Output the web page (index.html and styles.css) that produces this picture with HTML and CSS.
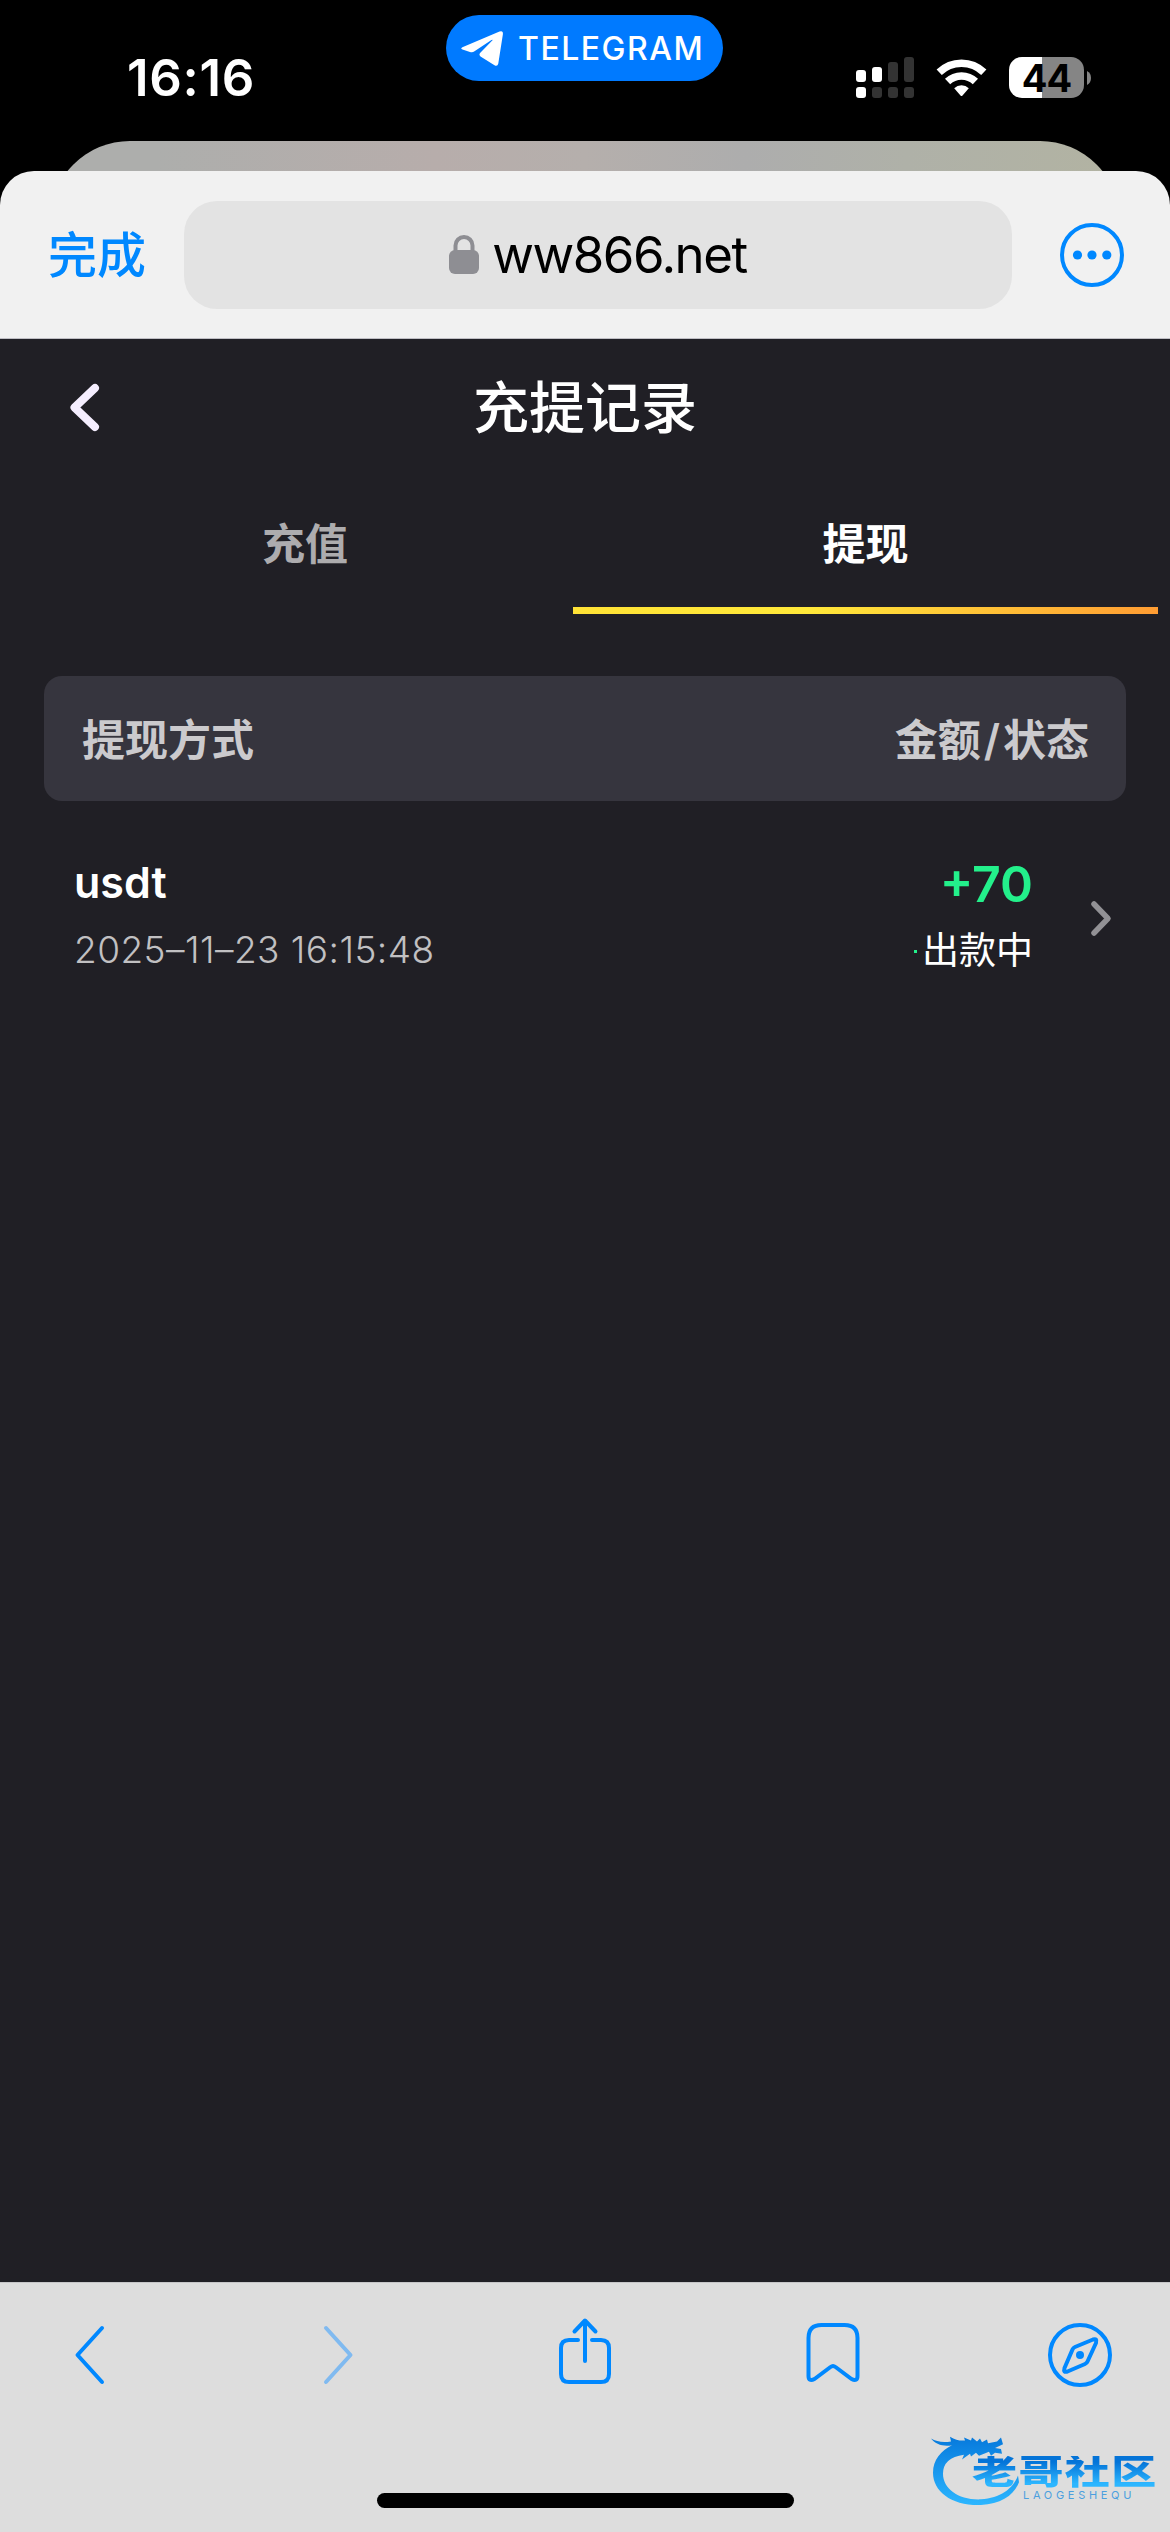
FILE: index.html
```html
<!DOCTYPE html>
<html lang="zh-CN">

<head>
    <meta charset="UTF-8">
    <meta name="viewport" content="width=device-width, initial-scale=1.0">
    <title>充提记录</title>
    <link rel="stylesheet" href="styles.css">
</head>

<body>
    <div class="status-bar">
        <div class="time">16:16</div>
        <div class="app-pill">
            <svg class="plane" viewBox="0 0 42 35" width="42" height="35">
                <path d="M1.4 16.2 38.5 .6Q42.3-.6 41.9 3.200L37.300 32.500Q36.500 35.800 33.500 34.200L19.500 25.400Q17.500 23.800 19.300 21.800L31.500 9.300Q32 8.200 30.500 8.900L13.500 20.200Q11.500 21.600 9 20.900L1.500 18.500Q-1 17.500 1.400 16.200Z" fill="#fff" />
            </svg>
            <span>TELEGRAM</span>
        </div>
        <div class="status-icons">
            <svg class="signal" viewBox="0 0 58 41" width="58" height="41">
                <g fill="#fff">
                    <rect x="0" y="13" width="10" height="12" rx="3" />
                    <rect x="16" y="10" width="10" height="15" rx="3" />
                    <rect x="0" y="30" width="10" height="11" rx="3" />
                </g>
                <g fill="#333">
                    <rect x="32" y="5" width="10" height="20" rx="3" />
                    <rect x="48" y="0" width="10" height="25" rx="3" />
                    <rect x="16" y="30" width="10" height="11" rx="3" />
                    <rect x="32" y="30" width="10" height="11" rx="3" />
                    <rect x="48" y="30" width="10" height="11" rx="3" />
                </g>
            </svg>
            <svg class="wifi" viewBox="0 0 51 38" width="51" height="38">
                <g fill="none" stroke="#fff" stroke-width="7.500">
                    <path d="M3.200 13.300a32 32 0 0 1 44.600 0" />
                    <path d="M11.600 22.500a20 20 0 0 1 27.800 0" />
                </g>
                <path d="M18.200 29.300a10.500 10.500 0 0 1 14.600 0L26.500 36.500q-1 1-2 0Z" fill="#fff" />
            </svg>
            <div class="battery"><span>44</span></div>
            <svg class="battery-tip" viewBox="0 0 4 14" width="4" height="14">
                <path d="M0 0q4 2 4 7t-4 7z" fill="#858585" />
            </svg>
        </div>
    </div>
    <div class="back-card"></div>

    <div class="browser-bar">
        <span class="done">完成</span>
        <div class="address">
            <svg viewBox="0 0 30 39" width="30" height="39">
                <path d="M6.500 18V10.500a8.500 8.500 0 0 1 17 0V18" fill="none" stroke="#8e8e93" stroke-width="4" />
                <rect x="0" y="15" width="30" height="24" rx="6" fill="#8e8e93" />
            </svg>
            <span>ww866.net</span>
        </div>
        <svg class="more" viewBox="0 0 64 64" width="64" height="64">
            <circle cx="32" cy="32" r="30" fill="none" stroke="#08f" stroke-width="4" />
            <g fill="#08f">
                <circle cx="17.500" cy="32" r="4.600" />
                <circle cx="32" cy="32" r="4.600" />
                <circle cx="46.800" cy="32" r="4.600" />
            </g>
        </svg>
    </div>

    <div class="page">
        <div class="page-header">
            <svg class="back" viewBox="0 0 29 47" width="29" height="47">
                <path d="M25 4 4.500 23.500 25 43" fill="none" stroke="#f5eeff" stroke-width="8" stroke-linecap="round" stroke-linejoin="round" />
            </svg>
            <h1 class="title">充提记录</h1>
        </div>
        <div class="tabs">
            <div class="tab">充值</div>
            <div class="tab active">提现</div>
        </div>
        <div class="table-head">
            <span>提现方式</span>
            <span>金额<span class="slash">/</span>状态</span>
        </div>
        <div class="record">
            <div class="record-info">
                <div class="record-name">usdt</div>
                <div class="record-time">2025–11–23 16:15:48</div>
            </div>
            <div class="record-state">
                <div class="amount">+70</div>
                <div class="state"><i class="dot"></i>出款中</div>
            </div>
            <svg class="arrow" viewBox="0 0 20 35" width="20" height="35">
                <path d="M3 3 17 17.500 3 32" fill="none" stroke="#929195" stroke-width="5.500" stroke-linecap="round" stroke-linejoin="round" />
            </svg>
        </div>
    </div>

    <div class="toolbar">
        <div class="tools">
            <svg viewBox="0 0 64 72" width="64" height="72">
                <path d="M44 9 19.500 36 44 63" />
            </svg>
            <svg class="disabled" viewBox="0 0 64 72" width="64" height="72">
                <path d="M20 9 44.500 36 20 63" />
            </svg>
            <svg viewBox="0 0 64 72" width="64" height="72">
                <path d="M32 42V2M21.500 12.500 32 1.500l10.500 11M25 21h-9q-8 0-8 8v26q0 8 8 8h32q8 0 8-8V29q0-8-8-8h-9" />
            </svg>
            <svg viewBox="0 0 64 72" width="64" height="72">
                <path d="M7.500 19q0-13 13-13h23q13 0 13 13v38q0 6-6 3L34.500 48q-2.500-2-5 0L13.500 60q-6 3-6-3Z" />
            </svg>
            <svg viewBox="0 0 64 72" width="64" height="72">
                <circle cx="32" cy="36" r="30" />
                <path d="M45 20.500 27 28q-1.800.8-2.500 2.500L16.500 49q-1.500 5 3 3.500L37 45q1.800-.8 2.500-2.500L48 24q1.500-5-3-3.500Z" />
                <circle class="solid" cx="32" cy="36" r="4" />
            </svg>
        </div>
        <div class="home-indicator"></div>
        <div class="watermark">
            <svg viewBox="0 0 96 80" width="96" height="76" preserveAspectRatio="none">
                <defs>
                    <linearGradient id="dragon" x1="0" y1="0" x2="0" y2="1">
                        <stop offset="0" stop-color="#0679dc" />
                        <stop offset="1" stop-color="#2cb6ff" />
                    </linearGradient>
                </defs>
                <path fill="url(#dragon)" d="M0 9q8 5 20 3l-1-5q8 5 15 4l-1-3 7 3 1-3 5 4 3-3 2 4 5-3 1 4 9-2 4-4 2 7-8 4 6 1 1 5-7-1-4 3-2-4-10 4-3-3-5 4-1-3-8 6 2-5Q12 29 12 46c0 16 16 28 38 27 19-1 32-11 37-25l1 7C83 69 70 78 50 79 21 80 2 65 2 45 2 31 10 22 21 16 13 18 4 15 0 9Z" />
            </svg>
            <div class="watermark-name">老哥社区</div>
            <div class="watermark-sub">LAOGESHEQU</div>
        </div>
    </div>
</body>

</html>
```
FILE: styles.css
```css
* {
    box-sizing: border-box;
}

body {
    margin: 0;
    width: 1170px;
    height: 2532px;
    display: flex;
    flex-direction: column;
    overflow: hidden;
    background-color: #000;
    font-family: 'Inter', 'Noto Sans CJK SC', sans-serif;
    color: #fff;
}

svg {
    display: block;
    flex-shrink: 0;
    overflow: visible;
}

.status-bar {
    height: 141px;
    flex-shrink: 0;
    display: grid;
    grid-template-columns: 446px 277px 447px;
    align-items: start;
}

.time {
    padding: 48px 0 0 127px;
    font-size: 51px;
    font-weight: 600;
    line-height: 60px;
    letter-spacing: 0.7px;
}

.app-pill {
    height: 66px;
    margin-top: 15px;
    padding-left: 15px;
    display: flex;
    align-items: center;
    gap: 15px;
    border-radius: 33px;
    background-color: #007aff;
    font-size: 32px;
    font-weight: 500;
    letter-spacing: 1.500px;
}

.status-icons {
    display: flex;
    align-items: center;
    margin-top: 57px;
    padding-left: 133px;
}

.wifi {
    margin-left: 22px;
}

.battery {
    width: 75px;
    height: 41px;
    margin-left: 22px;
    border-radius: 13px;
    background: linear-gradient(to right, #fff 33px, #858585 33px);
    color: #000;
    font-size: 38px;
    font-weight: 700;
    line-height: 42px;
    text-align: center;
    letter-spacing: -1px;
}

.battery-tip {
    margin-left: 3px;
}

.back-card {
    width: 1070px;
    height: 30px;
    margin: 0 auto;
    flex-shrink: 0;
    overflow: hidden;
}

/* only the top edge of the card behind the sheet is visible */
.back-card::before {
    content: "";
    display: block;
    height: 160px;
    border-radius: 80px;
    background: linear-gradient(to right, #adaeac 10%, #b7adab 36%, #b5afac 50%, #adadad 65%, #afb1a8 80%, #b2b3a2);
}

.browser-bar {
    height: 168px;
    flex-shrink: 0;
    display: flex;
    align-items: center;
    padding: 0 46px 0 48px;
    border-radius: 34px 34px 0 0;
    border-bottom: 1px solid #bfbec4;
    background-color: #f1f1f1;
}

.done {
    width: 136px;
    padding-top: 2px;
    color: #08f;
    font-size: 49px;
    font-weight: 500;
    line-height: 60px;
}

.address {
    width: 828px;
    height: 108px;
    display: flex;
    align-items: center;
    justify-content: center;
    gap: 13px;
    border-radius: 33px;
    background-color: #e3e3e3;
    color: #000;
    font-size: 51px;
    letter-spacing: -1.500px;
}

.more {
    margin-left: auto;
}

.page {
    flex: 1;
    background-color: #201f25;
}

.page-header {
    height: 137px;
    display: flex;
    align-items: center;
    padding-left: 70px;
}

.title {
    flex: 1;
    margin: 0 99px 0 0;
    font-size: 56px;
    font-weight: 500;
    line-height: 80px;
    text-align: center;
}

.tabs {
    display: grid;
    grid-template-columns: 536px 585px;
    height: 138px;
    padding-left: 37px;
}

.tab {
    padding-top: 38px;
    border-bottom: 7px solid transparent;
    color: #adacae;
    font-size: 43px;
    font-weight: 600;
    line-height: 60px;
    text-align: center;
}

.tab.active {
    color: #fff;
    border-image: linear-gradient(to right, #ffe236, #ffe83a 40%, #ff9c33) 1;
    border-width: 0 0 7px;
    border-style: solid;
}

.table-head {
    height: 125px;
    margin: 62px 44px 0;
    padding: 0 37px 4px 38px;
    display: flex;
    align-items: center;
    justify-content: space-between;
    border-radius: 18px;
    background-color: #36353e;
    color: #cbcacd;
    font-size: 43px;
    font-weight: 600;
}

.slash {
    margin: 0 3px;
}

.record {
    display: flex;
    align-items: center;
    margin: 50px 59px 0 74px;
    height: 134px;
}

.record-info {
    flex: 1;
    padding-top: 2px;
}

.record-name {
    font-size: 43px;
    font-weight: 600;
    line-height: 62px;
}

.record-time {
    color: #c1c0c2;
    font-size: 37px;
    font-weight: 300;
    line-height: 74px;
    letter-spacing: 0.450px;
}

.record-state {
    padding-top: 4px;
    text-align: right;
}

.amount {
    color: #23f08b;
    font-size: 50px;
    font-weight: 600;
    line-height: 62px;
}

.state {
    display: flex;
    align-items: center;
    justify-content: flex-end;
    font-size: 37px;
    line-height: 72px;
}

.dot {
    width: 3px;
    height: 3px;
    margin-right: 5px;
    background-color: #23f08b;
}

.arrow {
    margin-left: 58px;
}

.toolbar {
    position: relative;
    height: 250px;
    flex-shrink: 0;
    border-top: 1px solid #c6c6c8;
    background-color: #ddd;
}

.tools {
    display: flex;
    justify-content: space-between;
    padding: 36px 58px 0;
}

.tools svg {
    fill: none;
    stroke: #08f;
    stroke-width: 4;
    stroke-linecap: round;
    stroke-linejoin: round;
}

.tools .disabled {
    stroke: #80baf0;
}

.tools .solid {
    fill: #08f;
    stroke: none;
}

.home-indicator {
    width: 417px;
    height: 15px;
    margin: 102px auto 0;
    border-radius: 8px;
    background-color: #000;
}

/* site mark laid over the toolbar */
.watermark {
    position: absolute;
    left: 931px;
    top: 147px;
    width: 224px;
    height: 80px;
}

.watermark-name {
    position: absolute;
    left: 41px;
    top: 20px;
    font-size: 45px;
    font-weight: 900;
    line-height: 44px;
    letter-spacing: 1.400px;
    white-space: nowrap;
    background: linear-gradient(#0474d8 20%, #2cb6ff 85%);
    background-clip: text;
    -webkit-background-clip: text;
    color: transparent;
    transform: scaleY(0.75);
}

.watermark-sub {
    position: absolute;
    left: 92px;
    top: 59px;
    color: #4b9fdf;
    font-size: 11px;
    line-height: 12px;
    letter-spacing: 3.700px;
}
```
